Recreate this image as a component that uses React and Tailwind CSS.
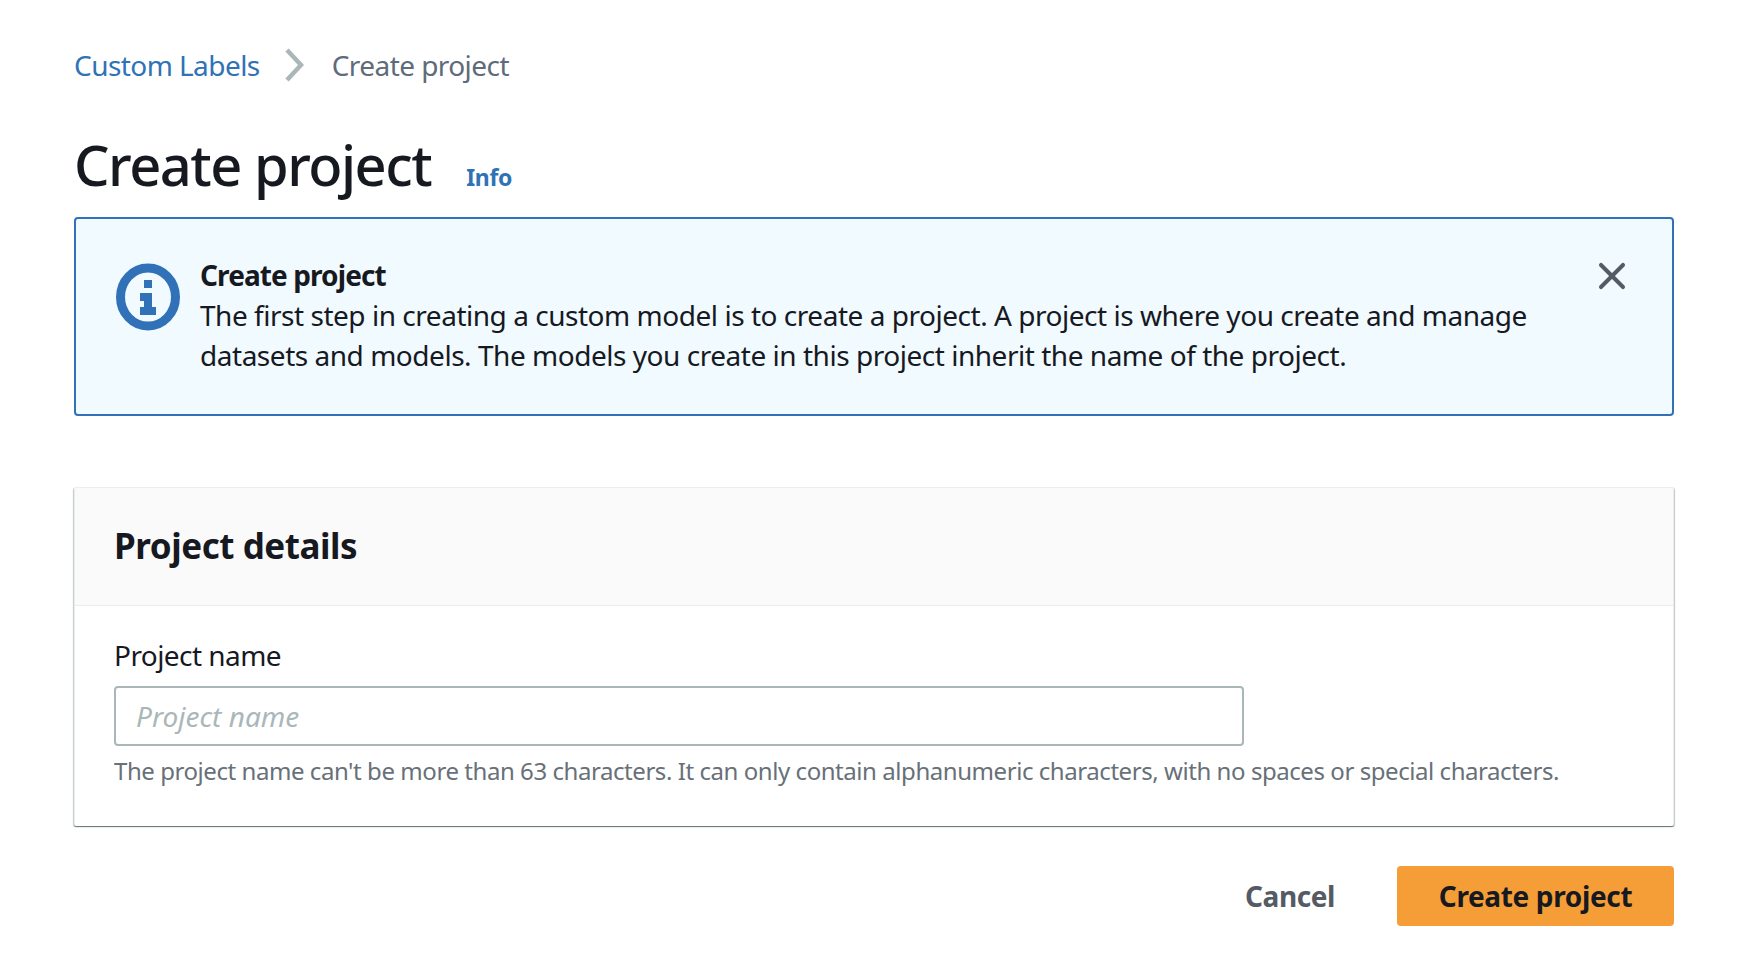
import { X } from "lucide-react";

function InfoIcon() {
  return (
    <svg viewBox="0 0 64 68" className="w-[64px] h-[68px] shrink-0">
      <ellipse cx="32" cy="34" rx="27.5" ry="29" fill="none" stroke="#3071b7" strokeWidth="9" />
      <rect x="28" y="17" width="8" height="8" fill="#3071b7" />
      <path d="M24 30h12v14h4v8H24v-8h4v-6h-4z" fill="#3071b7" />
    </svg>
  );
}

export default function App() {
  return (
    <div className="min-h-[976px] bg-white pl-[74px] pr-[72px] pt-[43px] font-['Noto_Sans',sans-serif] text-[#16191f]">
      <nav className="flex items-center h-[44px] text-[28px] tracking-[-0.56px]">
        <a className="text-[#2f72b6]">Custom Labels</a>
        <svg viewBox="0 0 20 34" className="w-[20px] h-[34px] ml-[24px] mr-[28px]">
          <path d="M3 2l14 15L3 32" fill="none" stroke="#aab7b8" strokeWidth="4.5" />
        </svg>
        <span className="text-[#5f6b7a]">Create project</span>
      </nav>

      <div className="flex items-baseline mt-[40px] h-[74px]">
        <h1 className="text-[56px] leading-[74px] font-medium tracking-[-1.5px]">Create project</h1>
        <a className="ml-[35px] text-[23px] font-bold text-[#2f72b6] tracking-[-0.3px]">Info</a>
      </div>

      <div className="mt-[16px] h-[199px] flex border-2 border-[#3071b7] rounded-[4px] bg-[#f1faff] pl-[40px] pr-[38px] pt-[44px]">
        <InfoIcon />
        <div className="ml-[20px] flex-1 text-[28px] leading-[40px] tracking-[-0.47px] mt-[-8px]">
          <div className="font-bold tracking-[-0.9px]">Create project</div>
          <p>
            The first step in creating a custom model is to create a project. A project is where you create and manage
            <br />
            datasets and models. The models you create in this project inherit the name of the project.
          </p>
        </div>
        <X className="w-[44px] h-[44px] text-[#545b64] mt-[-9px] shrink-0" strokeWidth={2.2} />
      </div>

      <section className="mt-[71px] border border-[#eaeded] border-b-0 rounded-[2px] bg-white shadow-[0_1px_1px_0_rgba(0,28,36,0.4),1px_1px_1px_0_rgba(0,28,36,0.2),-1px_1px_1px_0_rgba(0,28,36,0.2)] h-[339px]">
        <div className="h-[118px] bg-[#fafafa] border-b border-[#eaeded] pl-[39px] flex items-center">
          <h2 className="text-[35px] font-bold tracking-[-0.45px]">Project details</h2>
        </div>
        <div className="pl-[39px] pt-[29px]">
          <label className="block text-[28px] leading-[40px] tracking-[-0.56px]">Project name</label>
          <input
            placeholder="Project name"
            className="block mt-[11px] w-[1130px] h-[60px] border-2 border-[#aab7b8] rounded-[4px] px-[20px] text-[28px] italic outline-none placeholder:text-[#aab7b8]"
          />
          <p className="mt-[7px] text-[24px] leading-[36px] tracking-[-0.44px] text-[#687078]">
            The project name can't be more than 63 characters. It can only contain alphanumeric characters, with no spaces or special characters.
          </p>
        </div>
      </section>

      <div className="flex justify-end items-center mt-[40px]">
        <button className="text-[28px] font-bold text-[#545b64] tracking-[-0.4px] mr-[62px]">Cancel</button>
        <button className="w-[277px] h-[60px] rounded-[4px] bg-[#f59e38] text-[28px] font-bold tracking-[-0.35px]">Create project</button>
      </div>
    </div>
  );
}
